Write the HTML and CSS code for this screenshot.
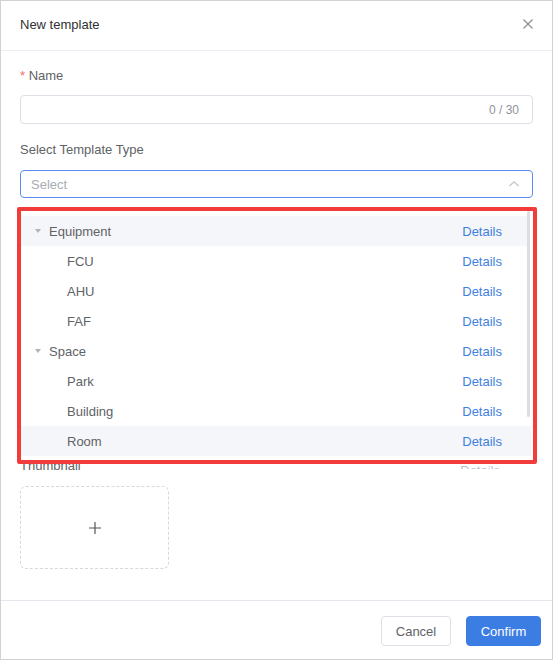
FILE: index.html
```html
<!DOCTYPE html>
<html>
<head>
<meta charset="utf-8">
<link rel="stylesheet" href="styles.css">
</head>
<body>
<div class="modal">
  <div class="header">
    <span class="title">New template</span>
    <span class="close">
      <svg width="12" height="12" viewBox="0 0 12 12"><path d="M1.5 1.5 L10.5 10.5 M10.5 1.5 L1.5 10.5" stroke="#8a8d93" stroke-width="1.2" fill="none"/></svg>
    </span>
  </div>
  <div class="body">
    <div class="field">
      <label class="label label-name"><span class="req">*</span> Name</label>
      <div class="input"><span class="count">0 / 30</span></div>
    </div>
    <div class="field field-select">
      <label class="label">Select Template Type</label>
      <div class="select-wrap">
        <div class="select">
          <span class="placeholder">Select</span>
          <svg class="chev" width="12" height="8" viewBox="0 0 12 8"><path d="M1.5 6 L6 1.8 L10.5 6" stroke="#c0c4cc" stroke-width="1.2" fill="none"/></svg>
        </div>
        <div class="dropdown">
          <div class="rows">
            <div class="row parent hl"><span class="name"><i class="caret"></i>Equipment</span><a class="link">Details</a></div>
            <div class="row child"><span class="name">FCU</span><a class="link">Details</a></div>
            <div class="row child"><span class="name">AHU</span><a class="link">Details</a></div>
            <div class="row child"><span class="name">FAF</span><a class="link">Details</a></div>
            <div class="row parent"><span class="name"><i class="caret"></i>Space</span><a class="link">Details</a></div>
            <div class="row child"><span class="name">Park</span><a class="link">Details</a></div>
            <div class="row child"><span class="name">Building</span><a class="link">Details</a></div>
            <div class="row child hl"><span class="name">Room</span><a class="link">Details</a></div>
          </div>
          <div class="scrollbar"></div>
        </div>
        <div class="annotation"></div>
      </div>
    </div>
    <div class="field">
      <div class="thumb-head">
        <label class="label">Thumbnail</label>
        <span class="ghost">Details</span>
      </div>
      <div class="upload">
        <svg width="14" height="14" viewBox="0 0 14 14"><path d="M7 1 V13 M1 7 H13" stroke="#555" stroke-width="1.2" fill="none"/></svg>
      </div>
    </div>
  </div>
  <div class="footer">
    <button class="btn">Cancel</button>
    <button class="btn primary">Confirm</button>
  </div>
</div>
</body>
</html>
```
FILE: styles.css
```css
* { box-sizing: border-box; }
html, body { margin: 0; padding: 0; background: #fff; }
body {
  font-family: "Liberation Sans", Arial, sans-serif;
  font-size: 13px;
  color: #606266;
}
.modal {
  width: 553px;
  height: 660px;
  border: 1px solid #d2d2d2;
  display: flex;
  flex-direction: column;
  background: #fff;
}
.header {
  height: 50px;
  flex: none;
  border-bottom: 1px solid #ebeef5;
  padding: 0 19px 3px 19px;
  display: flex;
  align-items: center;
  justify-content: space-between;
}
.title { color: #303133; font-size: 13px; }
.close { display: flex; margin-right: -1px; margin-top: -1px; }
.body {
  flex: 1;
  padding: 14px 19px 0 19px;
}
.field { display: flex; flex-direction: column; }
.label { line-height: 20px; height: 20px; color: #606266; }
.label-name { line-height: 22px; }
.req { color: #f56c6c; }
.input {
  margin-top: 10px;
  height: 29px;
  border: 1px solid #dcdfe6;
  border-radius: 4px;
  display: flex;
  align-items: center;
  justify-content: flex-end;
  padding-right: 13px;
  margin-bottom: 16px;
}
.count { color: #909399; font-size: 12px; }
.field-select { margin-bottom: 258px; }
.select-wrap { position: relative; margin-top: 10px; }
.select {
  height: 28px;
  border: 1px solid #5a8ff0;
  border-radius: 4px;
  display: flex;
  align-items: center;
  justify-content: space-between;
  padding: 0 12px 0 10px;
}
.placeholder { color: #a8abb2; }
.dropdown {
  position: absolute;
  top: 41px;
  left: 1px;
  width: 512px;
  height: 248px;
  background: #fff;
  overflow: hidden;
  padding-top: 5px;
  z-index: 2;
  display: flex;
}
.rows { width: 506px; }
.scrollbar {
  width: 3px;
  height: 206px;
  margin-top: -5px;
  background: #dcdde0;
  border-radius: 2px;
}
.row {
  height: 30px;
  display: flex;
  align-items: center;
  justify-content: space-between;
  padding-right: 25px;
  color: #606266;
}
.row.hl { background: #f5f6f9; }
.row.child:last-child.hl { width: 510px; padding-right: 29px; }
.parent .name { padding-left: 14px; display: flex; align-items: center; }
.child .name { padding-left: 46px; }
.caret {
  width: 0; height: 0;
  border-left: 3.5px solid transparent;
  border-right: 3.5px solid transparent;
  border-top: 4px solid #b0b3b8;
  margin-right: 8px;
}
.link { color: #3f7fe0; }
.annotation {
  position: absolute;
  top: 37px;
  left: -3px;
  width: 520px;
  height: 257px;
  border: 4px solid #f23b3b;
  border-radius: 2px;
  z-index: 3;
  pointer-events: none;
}
.thumb-head {
  display: flex;
  justify-content: space-between;
  align-items: flex-start;
  height: 20px;
  padding-right: 33px;
}
.ghost {
  color: #b8c0ce;
  line-height: 13px;
  height: 5px;
  overflow: hidden;
  margin-top: 8px;
}
.upload {
  margin-top: 10px;
  width: 149px;
  height: 83px;
  border: 1px dashed #d6d8dc;
  border-radius: 6px;
  display: flex;
  align-items: center;
  justify-content: center;
}
.footer {
  flex: none;
  height: 59px;
  border-top: 1px solid #e4e7ed;
  display: flex;
  justify-content: flex-end;
  align-items: flex-start;
  gap: 15px;
  padding: 15px 11px 0 0;
}
.btn {
  height: 30px;
  font-family: "Liberation Sans", Arial, sans-serif;
  font-size: 13px;
  border-radius: 4px;
  border: 1px solid #dcdfe6;
  background: #fff;
  color: #606266;
  padding: 0;
  width: 70px;
}
.btn.primary {
  width: 75px;
  background: #3b7de3;
  border-color: #3b7de3;
  color: #fff;
}
```
